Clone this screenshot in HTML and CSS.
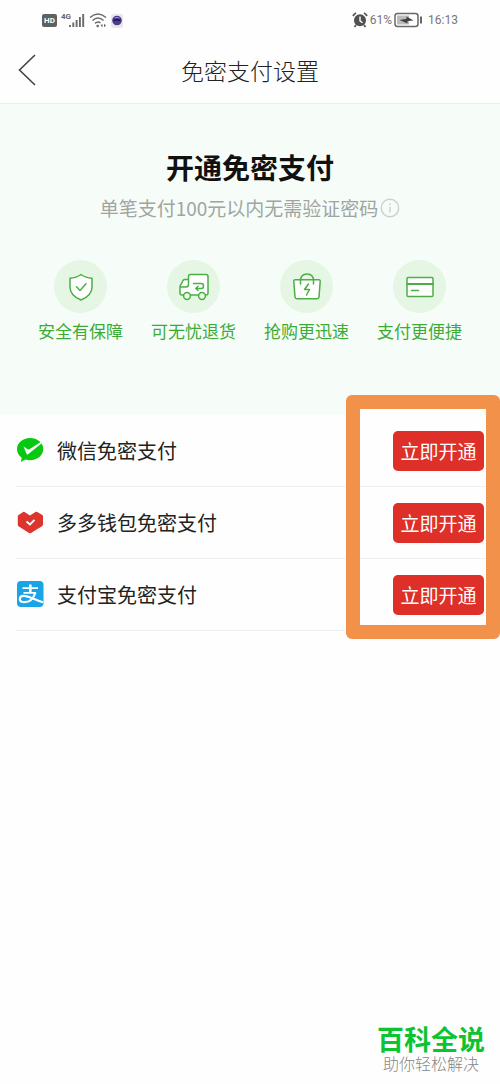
FILE: index.html
```html
<!DOCTYPE html>
<html lang="zh-CN">
<head>
<meta charset="utf-8">
<meta name="viewport" content="width=device-width, initial-scale=1">
<title>免密支付设置</title>
<link rel="stylesheet" href="styles.css">
</head>
<body>
<div class="page">
  <div class="status">
    <div class="status-group">
      <span class="hd">HD</span>
      <svg class="signal" width="24" height="18" viewBox="0 0 24 18" aria-hidden="true">
        <text x="0" y="8" class="net">4G</text>
        <path d="M9 14v2M12.3 11.500v4.500M15.600 9v7M18.900 6v10M22.200 3v13" stroke="#6a6a6a" stroke-width="1.900"/>
      </svg>
      <svg width="18" height="18" viewBox="0 0 18 18" fill="none" stroke="#6a6a6a" stroke-width="1.500" aria-hidden="true">
        <path d="M1 6.500Q9-.5 17 6.500M3.500 9.500Q9 4.500 14.500 9.500M6 12.300Q9 9.800 11.500 12"/>
        <circle cx="8.700" cy="15" r="1.300" fill="#6a6a6a" stroke="none"/>
        <path d="M13.500 12.800v3.400L11.500 14.500zM15 12.800v3.400L17 14.500z" fill="#6a6a6a" stroke="none"/>
      </svg>
      <svg width="12" height="16" viewBox="0 0 12 16" aria-hidden="true">
        <rect x="0" y="2" width="12" height="14" rx="2" fill="#ebe6ee"/>
        <circle cx="6" cy="8.500" r="4.800" fill="#4c3c91"/>
        <path d="M2.500 8.500Q6 7 9.500 8.500" stroke="#1d174a" stroke-width="1.500" fill="none"/>
        <path d="M3.500 6Q6 4.500 8.500 6" stroke="#9a8cd0" fill="none"/>
      </svg>
    </div>
    <div class="status-group status-right">
      <svg width="16" height="16" viewBox="0 0 16 16" fill="none" aria-hidden="true">
        <circle cx="8" cy="8.300" r="6" fill="#505050"/>
        <path d="M1 4Q2 2 4 1M15 4Q14 2 12 1M4 13l-1.500 2M12 13l1.500 2" stroke="#505050" stroke-width="1.700"/>
        <path d="M8 4.500v4.300l2.500 2" stroke="#fff" stroke-width="1.400"/>
      </svg>
      <span>61%</span>
      <svg class="battery" width="28" height="16" viewBox="0 0 28 16" aria-hidden="true">
        <rect x="1" y="1.500" width="23" height="13" rx="2.500" fill="none" stroke="#686868" stroke-width="1.500"/>
        <rect x="3" y="3.500" width="12" height="9" fill="#bcbcbc"/>
        <path d="M5.500 8l7-1.200V4.500L19.500 8.500l-6 .5v2.500z" fill="#404040"/>
        <path d="M27 4.500v7" stroke="#686868" stroke-width="2"/>
      </svg>
      <time>16:13</time>
    </div>
  </div>

  <header class="nav">
    <a class="back" href="#" aria-label="返回">
      <svg width="20" height="32" viewBox="0 0 20 32" fill="none" stroke="#444" stroke-width="1.600" aria-hidden="true"><path d="M19 1L3.500 16 19 31"/></svg>
    </a>
    <h1 class="nav-title">免密支付设置</h1>
  </header>

  <main>
    <section class="hero">
      <h2 class="hero-title">开通免密支付</h2>
      <p class="hero-sub">单笔支付100元以内无需验证密码
        <svg width="20" height="20" viewBox="0 0 20 20" fill="none" stroke="#cbd2cd" stroke-width="1.400" aria-hidden="true"><circle cx="10" cy="10" r="8.700"/><path d="M10 8.500v6M10 5.300v1.600"/></svg>
      </p>
      <ul class="features">
        <li class="feature">
          <span class="disc"><svg width="32" height="32" viewBox="0 0 32 32" aria-hidden="true">
            <path d="M16 3.500Q20.500 7 27 7.300V16Q27 24.500 16 29 5 24.500 5 16V7.300Q11.500 7 16 3.500z" fill="#fff"/>
            <path d="M11.500 15.800l3.500 3.600 6-6.600" />
          </svg></span>
          安全有保障
        </li>
        <li class="feature">
          <span class="disc"><svg width="32" height="32" viewBox="0 0 32 32" aria-hidden="true">
            <path d="M10.500 13.500V5.500q0-2 2-2h15.500q2 0 2 2V22q0 2-2 2H4q-2 0-2-2V16q0-1.500 1-2.500L5 9.500q.8-1 2-1h3.500M2 16h6q2.500 0 2.500-2.500" fill="#fff"/>
            <circle cx="9" cy="25" r="3.400" fill="#e9f7e9"/><circle cx="24" cy="25" r="3.400" fill="#e9f7e9"/>
            <path d="M15.500 12.500h8q2 0 2 2.500t-2 2.500h-5M20 15.300l-2.200 2.200 2.200 2"/>
          </svg></span>
          可无忧退货
        </li>
        <li class="feature">
          <span class="disc"><svg width="32" height="32" viewBox="0 0 32 32" aria-hidden="true">
            <path d="M4.300 8.700h23.400q1.700 0 1.500 1.700L28 26q-.2 1.700-1.900 1.700H5.900Q4.200 27.700 4 26L2.800 10.400q-.2-1.700 1.500-1.700z" fill="#fff"/>
            <path d="M9.500 13V10q0-7 6.500-7t6.500 7v3M17.500 13l-4 5.500h5L15.500 24"/>
          </svg></span>
          抢购更迅速
        </li>
        <li class="feature">
          <span class="disc"><svg width="32" height="32" viewBox="0 0 32 32" aria-hidden="true">
            <rect x="3" y="6.500" width="26" height="19" rx="1" fill="#fff"/><path d="M3 13h26" stroke-width="2"/><path d="M7.500 19.500h7"/>
          </svg></span>
          支付更便捷
        </li>
      </ul>
    </section>

    <section class="methods">
      <div class="method">
        <svg width="28" height="28" viewBox="0 0 28 28" aria-hidden="true">
          <path d="M14 1C6.500 1 1 6 1 12.200c0 3.600 1.900 6.500 4.700 8.500L4.800 25l4.600-2.400q2.200.6 4.600.6c7.500 0 13.300-4.900 13.300-11.100S21.500 1 14 1z" fill="#09c812"/>
          <path d="M7.500 9.500l4.200 2.800q.8.500 1.700 0L24.800 5l1 1.300L12 17.300q-1 .6-1.500-.5z" fill="#fff"/>
        </svg>
        <span class="method-name">微信免密支付</span>
        <button class="open" type="button" aria-label="立即开通微信免密支付">立即开通</button>
      </div>
      <div class="method">
        <svg width="28" height="28" viewBox="0 0 28 28" aria-hidden="true">
          <path d="M8.500 3L14 6.500 19.500 3q.9-.5 1.800 0l5 3q.7.500.7 1.300v8.200q0 .9-.7 1.500L15 24q-1 .6-2 0L2.500 17.200q-.7-.5-.7-1.400V7.300q0-.9.800-1.300l4.500-3q.7-.5 1.400 0z" fill="#de342e"/>
          <path d="M10.500 12.500l3.500 3 4.500-4.700" fill="none" stroke="#fff" stroke-width="1.900"/>
        </svg>
        <span class="method-name">多多钱包免密支付</span>
        <button class="open" type="button" aria-label="立即开通多多钱包免密支付">立即开通</button>
      </div>
      <div class="method">
        <svg width="28" height="28" viewBox="0 0 28 28" aria-hidden="true">
          <rect x="1" y="0" width="26.500" height="26" rx="4" fill="#18a4e6"/>
          <g fill="none" stroke="#fff">
            <path d="M6.500 7.200h15.500M7.500 11.800h12.500" stroke-width="1.800"/>
            <path d="M14.300 3.500v8" stroke-width="2.600"/>
            <path d="M19.500 11.500C17.500 17.500 13.500 21.200 8.500 21.200c-3.400 0-4.700-1.500-4.700-3.200s1.500-3.200 4.200-3.200c5 0 10 3.700 19 6.500" stroke-width="2.200"/>
          </g>
        </svg>
        <span class="method-name">支付宝免密支付</span>
        <button class="open" type="button" aria-label="立即开通支付宝免密支付">立即开通</button>
      </div>
      <div class="highlight" aria-hidden="true"></div>
    </section>
  </main>

  <footer class="brand">
    <strong class="brand-name">百科全说</strong>
    <span class="brand-tag">助你轻松解决</span>
  </footer>
</div>
</body>
</html>
```
FILE: styles.css
```css
* {
  box-sizing: border-box;
}

body {
  margin: 0;
  background: #fefefe;
  color: #222;
  font-family: "Noto Sans CJK SC", sans-serif;
}

.page {
  min-height: 100vh;
  display: flex;
  flex-direction: column;
}

.status {
  display: flex;
  justify-content: space-between;
  height: 40px;
  padding: 0 42px;
  color: #777;
  font-family: Roboto, sans-serif;
  font-size: 12px;
}

.status-group {
  display: flex;
  align-items: center;
  gap: 4px;
}

.status-right {
  gap: 2px;
}

.battery {
  margin-right: 4px;
}

.hd {
  width: 15px;
  border-radius: 2px;
  background: #606060;
  color: #fff;
  font-size: 8px;
  font-weight: 700;
  line-height: 13px;
  text-align: center;
}

.net {
  fill: #666;
  font-size: 8px;
  font-weight: 700;
}

.nav {
  display: grid;
  grid-template-columns: 44px 1fr 44px;
  align-items: center;
  height: 64px;
  padding: 0 16px 3px;
  border-bottom: 1px solid #e9eeeb;
}

.back {
  display: flex;
}

.nav-title {
  margin: 0;
  color: #222;
  font-size: 23px;
  font-weight: 300;
  line-height: 32px;
  text-align: center;
}

.hero {
  padding: 43px 24px 70px;
  background: #f6fdf8;
  text-align: center;
}

.hero-title {
  margin: 0;
  color: #111;
  font-size: 28px;
  font-weight: 700;
  line-height: 40px;
}

.hero-sub {
  display: flex;
  justify-content: center;
  align-items: center;
  gap: 2px;
  margin: 7px 0 0;
  color: #a0a5a1;
  font-size: 19px;
  line-height: 28px;
}

.features {
  display: grid;
  grid-template-columns: repeat(4, 1fr);
  margin: 38px 0 0;
  padding: 0;
  list-style: none;
}

.feature {
  display: flex;
  flex-direction: column;
  align-items: center;
  gap: 4px;
  color: #3cab36;
  font-size: 17px;
  line-height: 28px;
  white-space: nowrap;
}

.disc {
  display: grid;
  place-items: center;
  width: 53px;
  height: 53px;
  border-radius: 50%;
  background: #e5f6e5;
}

.disc svg {
  fill: none;
  stroke: #4cae45;
  stroke-width: 1.5;
  stroke-linecap: round;
  stroke-linejoin: round;
}

.methods {
  position: relative;
  padding-left: 16px;
}

.method {
  display: flex;
  align-items: center;
  height: 72px;
  padding-right: 16px;
  border-bottom: 1px solid #efefef;
}

.method-name {
  flex: 1;
  padding-left: 13px;
  font-size: 20px;
  line-height: 28px;
}

.open {
  width: 91px;
  height: 40px;
  padding: 0;
  border: 0;
  border-radius: 5px;
  background: #de2f28;
  color: #fff;
  font: 19px/28px "Noto Sans CJK SC", sans-serif;
}

.highlight {
  position: absolute;
  inset: -20px 0 -8px auto;
  width: 154px;
  border: 14px solid #f29149;
  border-radius: 6px;
  background: linear-gradient(#fefefe 6px, transparent 6px);
  background-clip: padding-box;
  pointer-events: none;
}

.brand {
  display: flex;
  flex-direction: column;
  align-items: center;
  align-self: flex-end;
  margin-top: auto;
  padding: 0 15px 11px 0;
}

.brand-name {
  color: #0cc432;
  font-size: 27px;
  font-weight: 700;
  line-height: 28px;
}

.brand-tag {
  color: #888;
  font-size: 16px;
  font-weight: 300;
  line-height: 20px;
}
```
